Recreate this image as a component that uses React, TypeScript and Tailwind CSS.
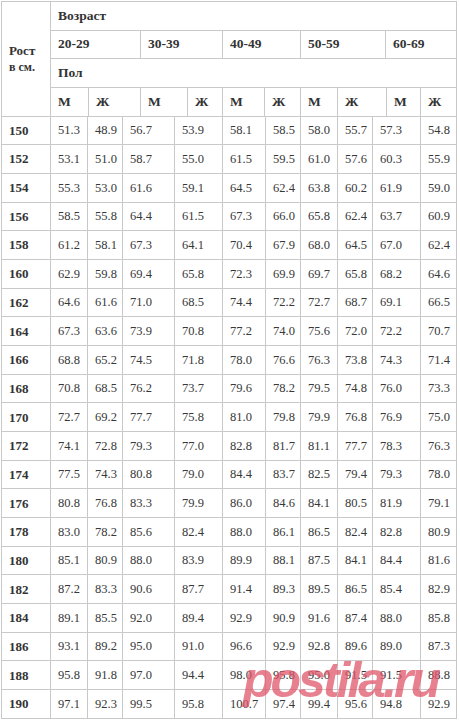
import React from "react";

const rows: [string, string[]][] = [
  ["150", ["51.3", "48.9", "56.7", "53.9", "58.1", "58.5", "58.0", "55.7", "57.3", "54.8"]],
  ["152", ["53.1", "51.0", "58.7", "55.0", "61.5", "59.5", "61.0", "57.6", "60.3", "55.9"]],
  ["154", ["55.3", "53.0", "61.6", "59.1", "64.5", "62.4", "63.8", "60.2", "61.9", "59.0"]],
  ["156", ["58.5", "55.8", "64.4", "61.5", "67.3", "66.0", "65.8", "62.4", "63.7", "60.9"]],
  ["158", ["61.2", "58.1", "67.3", "64.1", "70.4", "67.9", "68.0", "64.5", "67.0", "62.4"]],
  ["160", ["62.9", "59.8", "69.4", "65.8", "72.3", "69.9", "69.7", "65.8", "68.2", "64.6"]],
  ["162", ["64.6", "61.6", "71.0", "68.5", "74.4", "72.2", "72.7", "68.7", "69.1", "66.5"]],
  ["164", ["67.3", "63.6", "73.9", "70.8", "77.2", "74.0", "75.6", "72.0", "72.2", "70.7"]],
  ["166", ["68.8", "65.2", "74.5", "71.8", "78.0", "76.6", "76.3", "73.8", "74.3", "71.4"]],
  ["168", ["70.8", "68.5", "76.2", "73.7", "79.6", "78.2", "79.5", "74.8", "76.0", "73.3"]],
  ["170", ["72.7", "69.2", "77.7", "75.8", "81.0", "79.8", "79.9", "76.8", "76.9", "75.0"]],
  ["172", ["74.1", "72.8", "79.3", "77.0", "82.8", "81.7", "81.1", "77.7", "78.3", "76.3"]],
  ["174", ["77.5", "74.3", "80.8", "79.0", "84.4", "83.7", "82.5", "79.4", "79.3", "78.0"]],
  ["176", ["80.8", "76.8", "83.3", "79.9", "86.0", "84.6", "84.1", "80.5", "81.9", "79.1"]],
  ["178", ["83.0", "78.2", "85.6", "82.4", "88.0", "86.1", "86.5", "82.4", "82.8", "80.9"]],
  ["180", ["85.1", "80.9", "88.0", "83.9", "89.9", "88.1", "87.5", "84.1", "84.4", "81.6"]],
  ["182", ["87.2", "83.3", "90.6", "87.7", "91.4", "89.3", "89.5", "86.5", "85.4", "82.9"]],
  ["184", ["89.1", "85.5", "92.0", "89.4", "92.9", "90.9", "91.6", "87.4", "88.0", "85.8"]],
  ["186", ["93.1", "89.2", "95.0", "91.0", "96.6", "92.9", "92.8", "89.6", "89.0", "87.3"]],
  ["188", ["95.8", "91.8", "97.0", "94.4", "98.0", "95.8", "95.0", "91.5", "91.5", "88.8"]],
  ["190", ["97.1", "92.3", "99.5", "95.8", "100.7", "97.4", "99.4", "95.6", "94.8", "92.9"]],
];

const ages = ["20-29", "30-39", "40-49", "50-59", "60-69"];
const sexes = ["М", "Ж", "М", "Ж", "М", "Ж", "М", "Ж", "М", "Ж"];

const cell = "border-r border-b border-[#c9c9c9] flex items-center pl-[7px] h-[28.68px] overflow-hidden whitespace-nowrap";

export default function App() {
  return (
    <div className="relative bg-white w-[460px] h-[723px] pt-[1px] pl-[1px] text-[#383838]" style={{ fontFamily: '"Liberation Serif", "DejaVu Serif", serif' }}>
      <div className="w-[456px] border-l border-t border-[#c9c9c9] flex flex-col">
        <div className="flex">
          <div className="w-[49px] h-[114.72px] border-r border-b border-[#c9c9c9] flex flex-col justify-center pl-[7px] font-bold text-[13px] leading-[17px] text-[#333]">
            <span>Рост</span>
            <span className="text-[12px]">в см.</span>
          </div>
          <div className="flex-1 flex flex-col font-bold text-[13.5px] text-[#333]">
            <div className={cell}>Возраст</div>
            <div className="grid grid-cols-[90px_82px_78px_85px_71px]">
              {ages.map((a) => (
                <div key={a} className={cell}>{a}</div>
              ))}
            </div>
            <div className={cell}>Пол</div>
            <div className="grid grid-cols-[38px_52px_47px_35px_42px_36px_37px_49px_34px_36px]">
              {sexes.map((s, i) => (
                <div key={i} className={cell}>{s}</div>
              ))}
            </div>
          </div>
        </div>
        {rows.map(([h, vals]) => (
          <div key={h} className="grid grid-cols-[49px_37px_35px_52px_48px_43px_35px_37px_35px_48px_36px] text-[12.5px]">
            <div className={cell + " font-bold text-[13px] text-[#333]"}>{h}</div>
            {vals.map((v, i) => (
              <div key={i} className={cell}>{v}</div>
            ))}
          </div>
        ))}
      </div>
      <div
        className="absolute left-[243px] top-[655px] text-[50px] font-bold italic leading-none text-[#e0566a] opacity-75 tracking-[-3px]"
        style={{ fontFamily: '"Liberation Sans", Arial, sans-serif' }}
      >
        postila.ru
      </div>
    </div>
  );
}
